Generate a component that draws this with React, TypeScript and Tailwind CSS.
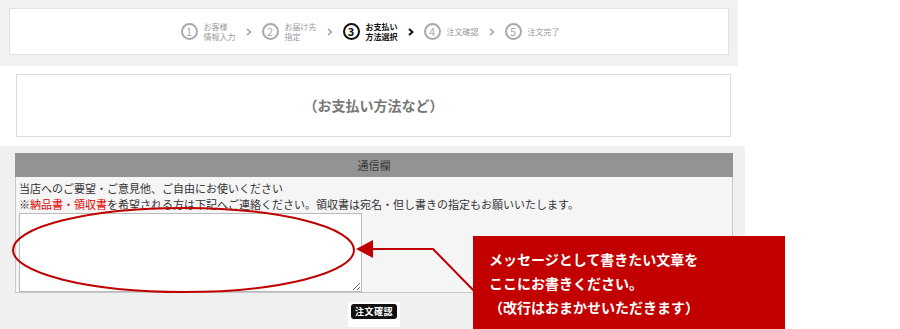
import React from "react";

function Chevron({ active }: { active?: boolean }) {
  return (
    <svg width="6" height="8" viewBox="0 0 6 8" className="mx-[10px] shrink-0">
      <path
        d="M1 1 L4.5 4 L1 7"
        fill="none"
        stroke={active ? "#111" : "#999"}
        strokeWidth={active ? 2 : 1.4}
      />
    </svg>
  );
}

function Step({
  n,
  lines,
  active,
}: {
  n: number;
  lines: string[];
  active?: boolean;
}) {
  return (
    <div className="flex items-center">
      <div
        className={
          active
            ? "w-[17px] h-[17px] rounded-full border-[2.5px] border-[#111] flex items-center justify-center text-[11px] font-bold text-[#111] leading-none"
            : "w-[17px] h-[17px] rounded-full border-2 border-[#aaa] flex items-center justify-center text-[11px] text-[#aaa] leading-none"
        }
      >
        {n}
      </div>
      <div
        className={
          active
            ? "ml-[6px] text-[8px] leading-[10px] font-bold text-[#111]"
            : "ml-[6px] text-[8px] leading-[10px] text-[#999]"
        }
      >
        {lines.map((l) => (
          <div key={l}>{l}</div>
        ))}
      </div>
    </div>
  );
}

export default function App() {
  return (
    <div className="relative w-[900px] h-[329px] bg-white overflow-hidden font-['Noto_Sans_CJK_JP','Liberation_Sans',sans-serif]">
      {/* Step bar */}
      <div className="w-[738px] h-[66px] bg-[#f1f1f1] pt-[8px] pl-[9px]">
        <div className="w-[720px] h-[47px] bg-white border border-[#e2e2e2] flex items-center justify-center pl-[2px]">
          <Step n={1} lines={["お客様", "情報入力"]} />
          <Chevron />
          <Step n={2} lines={["お届け先", "指定"]} />
          <Chevron />
          <Step n={3} lines={["お支払い", "方法選択"]} active />
          <Chevron active />
          <Step n={4} lines={["注文確認"]} />
          <Chevron />
          <Step n={5} lines={["注文完了"]} />
        </div>
      </div>

      {/* Payment placeholder */}
      <div className="pt-[8px] pl-[16px]">
        <div className="w-[715px] h-[63px] border border-[#dcdcdc] flex items-center justify-center text-[14px] font-bold text-[#777]">
          （お支払い方法など）
        </div>
      </div>

      {/* Message section */}
      <div className="mt-[9px] w-[745px] h-[183px] bg-[#f0f0f0] pt-[7px] pl-[15px]">
        <div className="w-[718px] h-[24px] bg-[#939393] flex items-center justify-center text-[11px] text-[#3a3a3a]">
          通信欄
        </div>
        <div className="w-[718px] h-[116px] bg-[#f5f5f5] border border-t-0 border-[#c8c8c8] pt-[3px] pl-[3px]">
          <div className="text-[11px] leading-[16px] text-[#333]">
            当店へのご要望・ご意見他、ご自由にお使いください
          </div>
          <div className="text-[11px] leading-[16px] text-[#333]">
            ※<span className="text-[#e60000]">納品書・領収書</span>
            を希望される方は下記へご連絡ください。領収書は宛名・但し書きの指定もお願いいたします。
          </div>
          <textarea className="mt-[1px] block w-[343px] h-[79px] bg-white border border-[#bbb] resize" />
        </div>
        <div className="w-[718px] flex justify-center pt-[9px]">
          <div className="bg-white px-[3px] pt-[2px] pb-[8px]">
            <div className="h-[15px] px-[4px] rounded-[3px] bg-[#111] text-white text-[9px] font-bold leading-[15px] tracking-[0.5px]">
              注文確認
            </div>
          </div>
        </div>
      </div>

      {/* Annotations */}
      <svg
        className="absolute left-0 top-0 pointer-events-none"
        width="900"
        height="329"
        viewBox="0 0 900 329"
      >
        <ellipse cx="183.5" cy="250" rx="170.5" ry="42" fill="none" stroke="#c00000" strokeWidth="2" />
        <polygon points="356,249 373,240 373,258" fill="#c00000" />
        <polyline points="372,249 433,249 480,297" fill="none" stroke="#c00000" strokeWidth="2" />
      </svg>

      <div className="absolute left-[473px] top-[236px] w-[312px] h-[93px] bg-[#c20000] pt-[11px] pl-[16px] text-white font-bold text-[14px] leading-[24px]">
        <div>メッセージとして書きたい文章を</div>
        <div>ここにお書きください。</div>
        <div>（改行はおまかせいただきます）</div>
      </div>
    </div>
  );
}
